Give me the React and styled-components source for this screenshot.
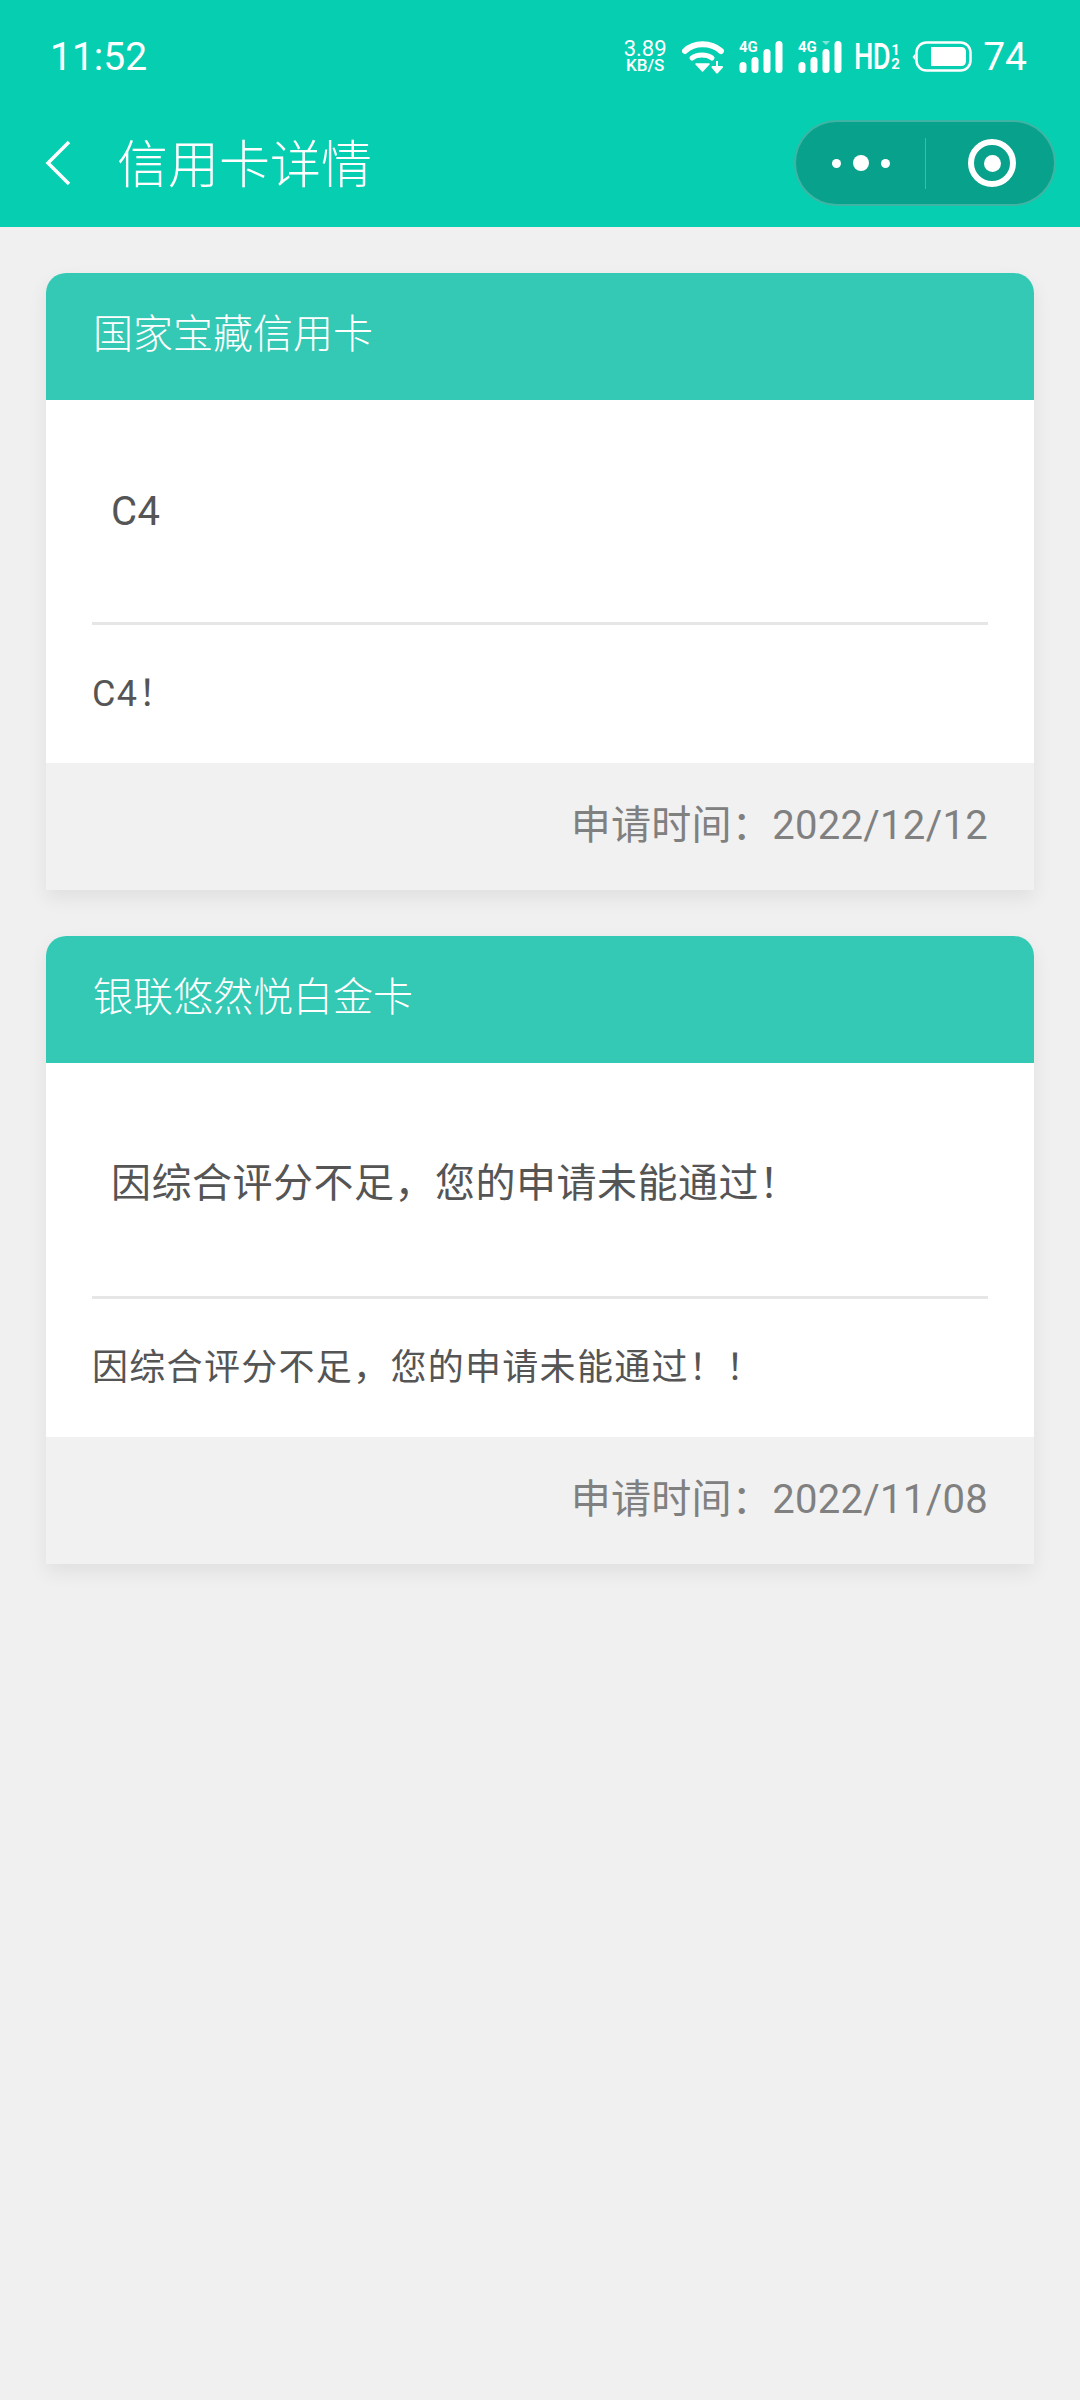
import React from "react";
import styled, { createGlobalStyle } from "styled-components";

const GlobalStyle = createGlobalStyle`
  html, body {
    margin: 0;
    padding: 0;
    background: #f0f0f0;
  }
  body {
    font-family: Roboto, "Noto Sans CJK SC", sans-serif;
  }
`;

const Page = styled.div`
  width: 1080px;
  min-height: 2400px;
  background: #f0f0f0;
`;

const TopBar = styled.header`
  height: 227px;
  background: #06ceb1;
  color: #fff;
  display: flex;
  flex-direction: column;
`;

const StatusBar = styled.div`
  height: 114px;
  display: flex;
  align-items: center;
  justify-content: space-between;
  padding: 0 53px 0 50px;
  box-sizing: border-box;
`;

const Time = styled.span`
  font-size: 39px;
  font-weight: 400;
`;

const StatusIcons = styled.div`
  display: flex;
  align-items: center;
`;

const Speed = styled.div`
  display: flex;
  flex-direction: column;
  align-items: center;
  width: 44px;
  margin-right: 15px;
  font-size: 22px;
  line-height: 17px;
`;

const SpeedUnit = styled.span`
  font-size: 17px;
  font-weight: 500;
`;

const Glyph = styled.svg`
  display: block;
  margin-right: ${(p) => p.$gap || 0}px;
`;

const SignalGlyph = styled(Glyph)`
  margin-top: -2px;
`;

const Hd = styled.span`
  display: flex;
  align-items: center;
  width: 49px;
  margin-right: 9px;
  font-size: 36px;
  font-weight: 500;
`;

const HdLetters = styled.span`
  display: inline-block;
  width: 37px;
  transform: scaleX(0.76);
  transform-origin: left center;
  letter-spacing: -1px;
`;

const HdFraction = styled.span`
  display: flex;
  flex-direction: column;
  align-items: center;
  font-size: 15px;
  line-height: 14px;
  font-weight: 700;
`;

const BatteryLevel = styled.span`
  font-size: 39px;
  font-weight: 400;
  margin-left: 11px;
`;

const NavBar = styled.nav`
  flex: 1;
  display: flex;
  align-items: center;
  padding: 0 24px 0 45px;
  margin-top: -15px;
`;

const Title = styled.h1`
  flex: 1;
  margin: 0 0 0 46px;
  padding-bottom: 4px;
  font-size: 51px;
  font-weight: 300;
`;

const Capsule = styled.div`
  width: 262px;
  height: 86px;
  box-sizing: border-box;
  border: 2px solid rgba(255, 255, 255, 0.22);
  border-radius: 43px;
  background: #08a18b;
  display: flex;
  align-items: center;
`;

const MenuPart = styled.div`
  width: 129px;
  height: 51px;
  display: flex;
  align-items: center;
  justify-content: center;
`;

const CapturePart = styled(MenuPart)`
  flex: 1;
  box-sizing: border-box;
  padding-left: 4px;
  border-left: 1px solid rgba(255, 255, 255, 0.25);
`;

const Dot = styled.span`
  width: ${(p) => p.$size}px;
  height: ${(p) => p.$size}px;
  margin: 0 6px;
  border-radius: 50%;
  background: #fff;
`;

const Ring = styled.span`
  width: 48px;
  height: 48px;
  box-sizing: border-box;
  border: 6px solid #fff;
  border-radius: 50%;
  display: flex;
  align-items: center;
  justify-content: center;

  &::after {
    content: "";
    width: 17px;
    height: 17px;
    border-radius: 50%;
    background: #fff;
  }
`;

const List = styled.main`
  display: flex;
  flex-direction: column;
  gap: 46px;
  padding: 46px 46px 0;
`;

const Card = styled.section`
  border-radius: 20px 20px 0 0;
  background: #fff;
  box-shadow: 0 8px 20px rgba(0, 0, 0, 0.07);
`;

const CardTitle = styled.h2`
  margin: 0;
  height: 127px;
  box-sizing: border-box;
  display: flex;
  align-items: center;
  padding: 0 0 12px 47px;
  border-radius: 20px 20px 0 0;
  background: #33c9b4;
  color: #fff;
  font-size: 40px;
  font-weight: 300;
`;

const CardBody = styled.div`
  padding: 0 46px;
`;

const Message = styled.p`
  margin: 0;
  padding: 88px 18px 87px 19px;
  border-bottom: 3px solid #e6e6e6;
  color: #555;
  font-size: 40px;
  letter-spacing: 0.5px;
`;

const Detail = styled.p`
  margin: 0;
  height: 138px;
  box-sizing: border-box;
  display: flex;
  align-items: center;
  padding-bottom: 8px;
  color: #555;
  font-size: 36px;
  letter-spacing: 1.3px;
`;

const CardFooter = styled.div`
  height: 127px;
  box-sizing: border-box;
  display: flex;
  align-items: center;
  justify-content: flex-end;
  padding: 0 46px 10px 0;
  background: #f1f1f1;
  color: #808080;
  font-size: 40px;
  letter-spacing: 0.3px;
`;

const WifiIcon = () => (
  <Glyph width="42" height="34" viewBox="0 0 42 34" $gap={15}>
    <path d="M3 11 C12 2 29 2 39 11" fill="none" stroke="#fff" strokeWidth="6" strokeLinecap="round" />
    <path d="M10 18 C15 14 25 14 30 18" fill="none" stroke="#fff" strokeWidth="5" strokeLinecap="round" />
    <path d="M14 24 L27 24 L20.5 31 Z" fill="#fff" stroke="#fff" strokeWidth="1.5" strokeLinejoin="round" />
    <path d="M35 21 V29 M30.5 27 H40 L35 32.5 Z" fill="#fff" stroke="#fff" strokeWidth="2" strokeLinejoin="round" />
  </Glyph>
);

const SignalIcon = ({ marker, gap }) => (
  <SignalGlyph width="44" height="36" viewBox="0 -2 44 36" $gap={gap}>
    <text x="0" y="12" fill="#fff" fontSize="15" fontWeight="700" fontFamily="Roboto, sans-serif">4G</text>
    <rect x="0.5" y="22" width="7" height="11" rx="3.5" fill="#fff" />
    <rect x="12.5" y="17" width="7" height="16" rx="3.5" fill="#fff" />
    <rect x="24.5" y="9" width="7" height="24" rx="3.5" fill="#fff" />
    <rect x="36.5" y="1" width="7" height="32" rx="3.5" fill="#fff" />
    {marker && <path d="M24 1 H32 L28 5 Z" fill="#7fe6d8" />}
  </SignalGlyph>
);

const BatteryIcon = () => (
  <Glyph width="60" height="32" viewBox="0 0 60 32">
    <path d="M3 13 L0.5 16 L3 19 Z" fill="#fff" />
    <rect x="4.5" y="1.5" width="54" height="28" rx="10" fill="none" stroke="#fff" strokeWidth="2.5" />
    <path d="M19 6 H49 Q54 6 54 11 V20 Q54 25 49 25 H19 Z" fill="#fff" />
  </Glyph>
);

const BackIcon = () => (
  <Glyph width="26" height="46" viewBox="0 0 26 46">
    <path d="M24 2 L3 23 L24 44" fill="none" stroke="#fff" strokeWidth="3.5" />
  </Glyph>
);

const cards = [
  {
    title: "国家宝藏信用卡",
    message: "C4",
    detail: "C4！",
    date: "2022/12/12",
  },
  {
    title: "银联悠然悦白金卡",
    message: "因综合评分不足，您的申请未能通过！",
    detail: "因综合评分不足，您的申请未能通过！！",
    date: "2022/11/08",
  },
];

export default function App() {
  return (
    <Page>
      <GlobalStyle />
      <TopBar>
        <StatusBar>
          <Time>11:52</Time>
          <StatusIcons>
            <Speed>
              <span>3.89</span>
              <SpeedUnit>KB/S</SpeedUnit>
            </Speed>
            <WifiIcon />
            <SignalIcon gap={15} />
            <SignalIcon gap={12} marker />
            <Hd>
              <HdLetters>HD</HdLetters>
              <HdFraction>
                <span>1</span>
                <span>2</span>
              </HdFraction>
            </Hd>
            <BatteryIcon />
            <BatteryLevel>74</BatteryLevel>
          </StatusIcons>
        </StatusBar>
        <NavBar>
          <BackIcon />
          <Title>信用卡详情</Title>
          <Capsule>
            <MenuPart>
              <Dot $size={9} />
              <Dot $size={16} />
              <Dot $size={9} />
            </MenuPart>
            <CapturePart>
              <Ring />
            </CapturePart>
          </Capsule>
        </NavBar>
      </TopBar>
      <List>
        {cards.map((card) => (
          <Card key={card.title}>
            <CardTitle>{card.title}</CardTitle>
            <CardBody>
              <Message>{card.message}</Message>
              <Detail>{card.detail}</Detail>
            </CardBody>
            <CardFooter>申请时间：{card.date}</CardFooter>
          </Card>
        ))}
      </List>
    </Page>
  );
}
